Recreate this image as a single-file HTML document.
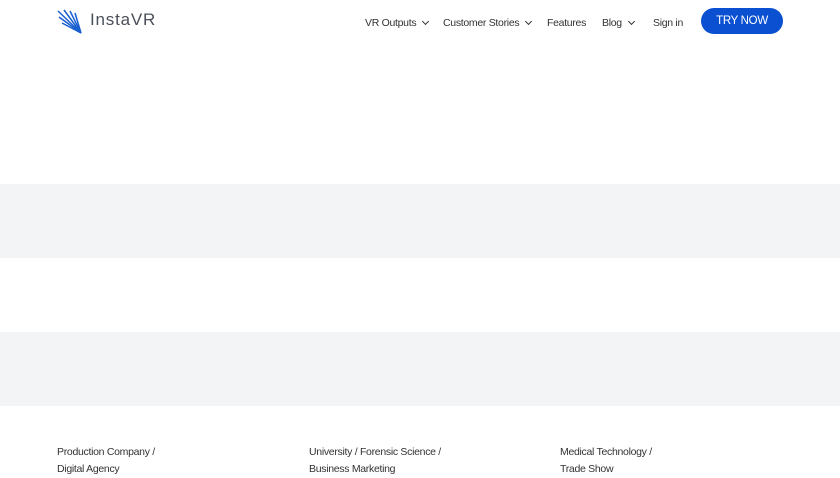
<!DOCTYPE html>
<html><head><style>
body{margin:0;width:840px;height:472px;overflow:hidden;background:#fff;font-family:"Liberation Sans",sans-serif;color:#333;}
.nav{position:absolute;top:0;left:0;width:840px;height:44px;}
.logo{position:absolute;left:57px;top:9px;}
.logotext{position:absolute;left:90px;top:10px;font-size:17px;color:#4a4f5a;letter-spacing:0.8px;}
.item{position:absolute;top:17px;font-size:10.5px;color:#333;letter-spacing:-0.3px;}
.chev{display:inline-block;width:4px;height:4px;border-right:1.1px solid #333;border-bottom:1.1px solid #333;transform:rotate(45deg);margin-left:7px;position:relative;top:-2px;}
.btn{position:absolute;left:701px;top:8px;width:82px;height:26px;border-radius:13px;background:#0a50d0;color:#fff;font-size:11.5px;text-align:center;line-height:27px;letter-spacing:-0.3px;}
.band{position:absolute;left:0;width:840px;height:74px;background:#f3f4f6;}
.ft{position:absolute;top:444px;font-size:10.5px;line-height:17px;color:#333;letter-spacing:-0.3px;}
</style></head><body>
<div class="nav">
<svg class="logo" width="28" height="26" viewBox="0 0 28 26">
<g stroke="#1a5fd0" stroke-width="1.5" fill="none">
<line x1="1" y1="2" x2="24" y2="24"/><line x1="2" y1="8" x2="24" y2="24"/><line x1="5" y1="14" x2="24" y2="24"/>
<line x1="7" y1="1" x2="24" y2="24"/><line x1="13" y1="2" x2="24" y2="24"/><line x1="18" y1="4" x2="24" y2="24"/>
</g></svg>
<div class="logotext">InstaVR</div>
<div class="item" style="left:365px">VR Outputs<span class="chev"></span></div>
<div class="item" style="left:443px">Customer Stories<span class="chev"></span></div>
<div class="item" style="left:547px">Features</div>
<div class="item" style="left:602px">Blog<span class="chev"></span></div>
<div class="item" style="left:653px">Sign in</div>
<div class="btn">TRY NOW</div>
</div>
<div class="band" style="top:184px"></div>
<div class="band" style="top:332px"></div>
<div class="ft" style="left:57px">Production Company /<br>Digital Agency</div>
<div class="ft" style="left:309px">University / Forensic Science /<br>Business Marketing</div>
<div class="ft" style="left:560px">Medical Technology /<br>Trade Show</div>
</body></html>
